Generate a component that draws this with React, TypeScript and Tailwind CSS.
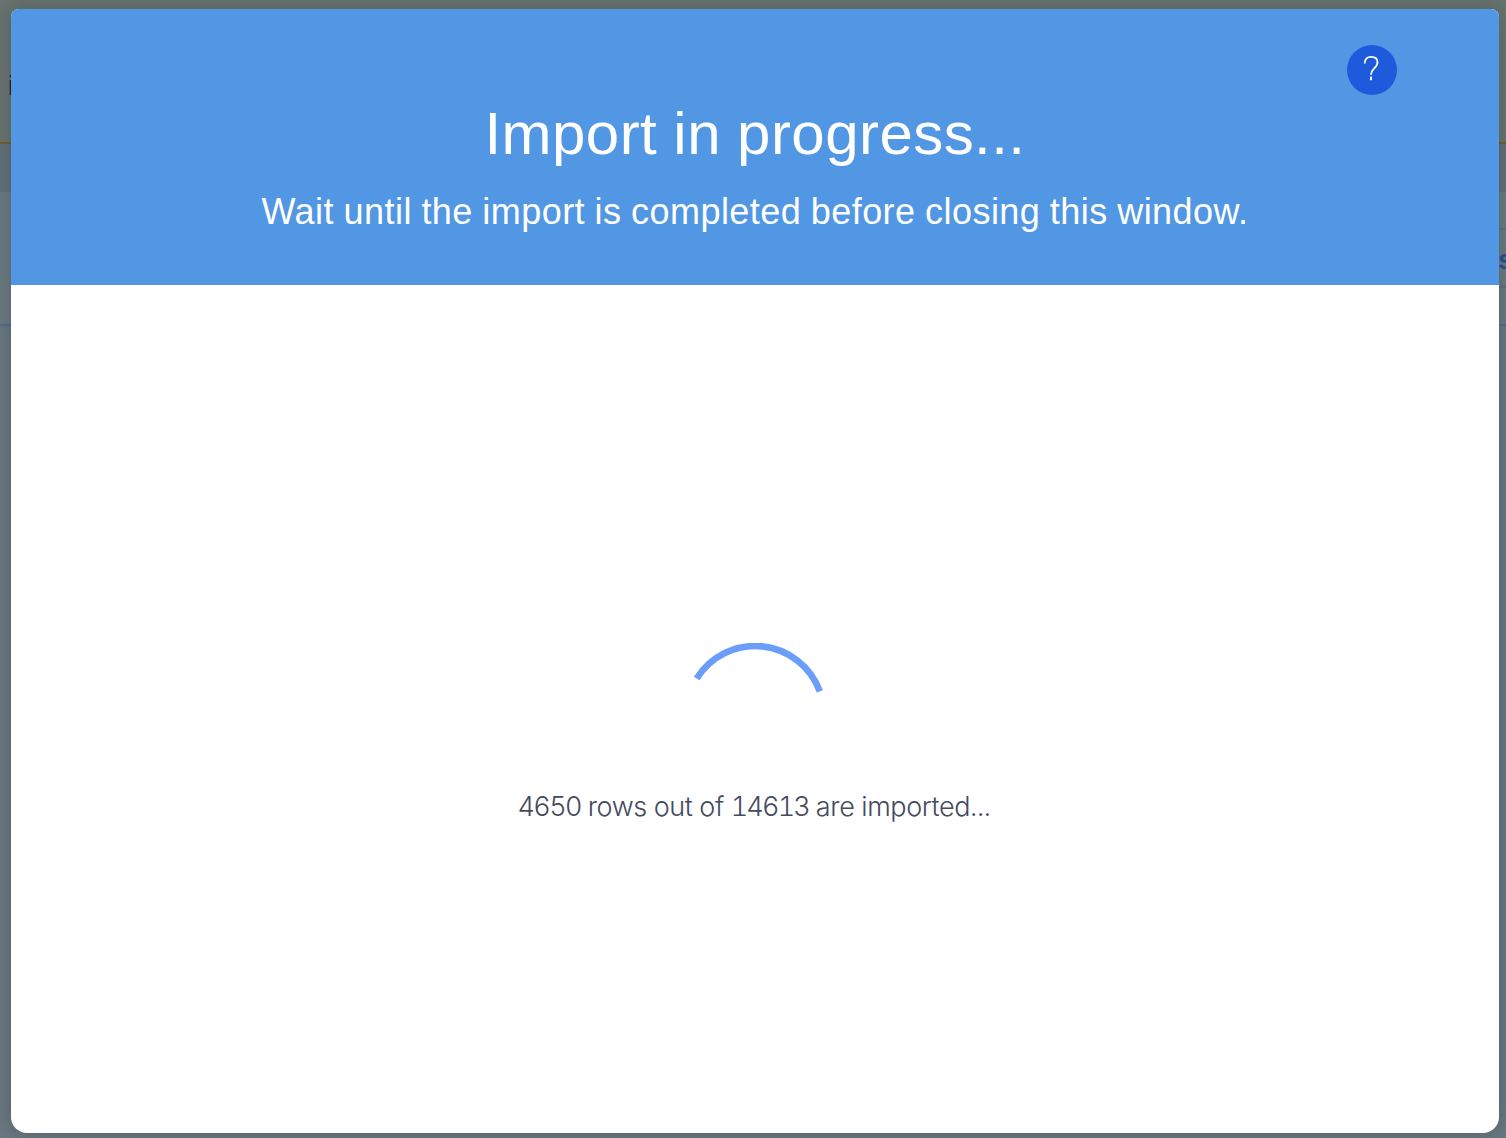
function Backdrop() {
  return (
    <div className="flex h-full flex-col bg-[#687780]">
      <div className="flex h-[142px] shrink-0 items-start bg-[#687370] pt-[70px] pl-[8px]">
        <span className="text-[28px] leading-8 text-[#1b222c]">i</span>
      </div>
      <div className="h-[2px] shrink-0 bg-[#6b622c]" />
      <div className="h-12 shrink-0 bg-[#616f79]" />
      <div className="flex h-[132px] shrink-0 flex-col items-end bg-[#6a7980] pt-9">
        <div className="flex h-[60px] w-4 items-center overflow-hidden border-y-2 border-[#5f6e83] pt-[3px] pl-[8px]">
          <span className="text-[28px] leading-8 font-bold text-[#2b4f93]">s</span>
        </div>
      </div>
      <div className="h-[2px] shrink-0 bg-[#536c8e]" />
    </div>
  );
}

function HelpButton() {
  return (
    <button aria-label="Help" className="absolute top-9 right-[102px] size-[50px] rounded-full bg-[#1d5bdc]">
      <svg viewBox="0 0 50 50" fill="none" stroke="white" strokeWidth="1.8" className="size-full">
        <path d="M17.7 18.5C17.7 14 20.2 11.9 24.2 11.9C28 11.9 30.5 14 30.5 17.3C30.5 20.2 29 21.7 27 23.6C24.9 25.6 24 26.9 24 29.8" />
        <path d="M24 31.6V35.3" strokeWidth="2" />
      </svg>
    </button>
  );
}

function Spinner() {
  return (
    <svg viewBox="0 0 144 144" fill="none" className="size-36">
      <path d="M13.7 35.5A68.8 68.8 0 0 1 136.8 48.3" stroke="#6b9dfb" strokeWidth="6.6" />
    </svg>
  );
}

export default function App() {
  return (
    <div className="relative h-[1138px] w-[1506px] overflow-hidden font-['Liberation_Sans',Arial,sans-serif]">
      <Backdrop />
      <div className="absolute inset-0 pt-[9px] pr-[7px] pb-[5px] pl-[11px]">
        <div
          role="dialog"
          className="relative flex h-full flex-col overflow-hidden rounded-t-[8px] rounded-b-[16px] bg-white shadow-[0_0_20px_rgba(0,0,0,0.2)]"
        >
          <header className="flex h-[276px] shrink-0 flex-col items-center bg-[#5297e4] pt-[93px] text-white">
            <h1 className="text-[60px] leading-[64px] tracking-[0.45px] [word-spacing:-1px] whitespace-nowrap">
              Import in progress...
            </h1>
            <p className="mt-[26px] text-[36px] leading-[40px] tracking-[0.45px] [word-spacing:-0.9px] whitespace-nowrap">
              Wait until the import is completed before closing this window.
            </p>
            <HelpButton />
          </header>
          <main className="flex flex-1 flex-col items-center pt-[358px]">
            <Spinner />
            <p className="mt-[4px] pr-[2px] font-['Inter','Liberation_Sans',sans-serif] text-[27px] leading-8 font-light tracking-[-0.4px] whitespace-nowrap text-[#444a60] tabular-nums">
              <span className="tracking-[-1.6px]">4650</span> rows out of{" "}
              <span className="tracking-[-1.8px]">14613</span> are imported...
            </p>
          </main>
        </div>
      </div>
    </div>
  );
}
